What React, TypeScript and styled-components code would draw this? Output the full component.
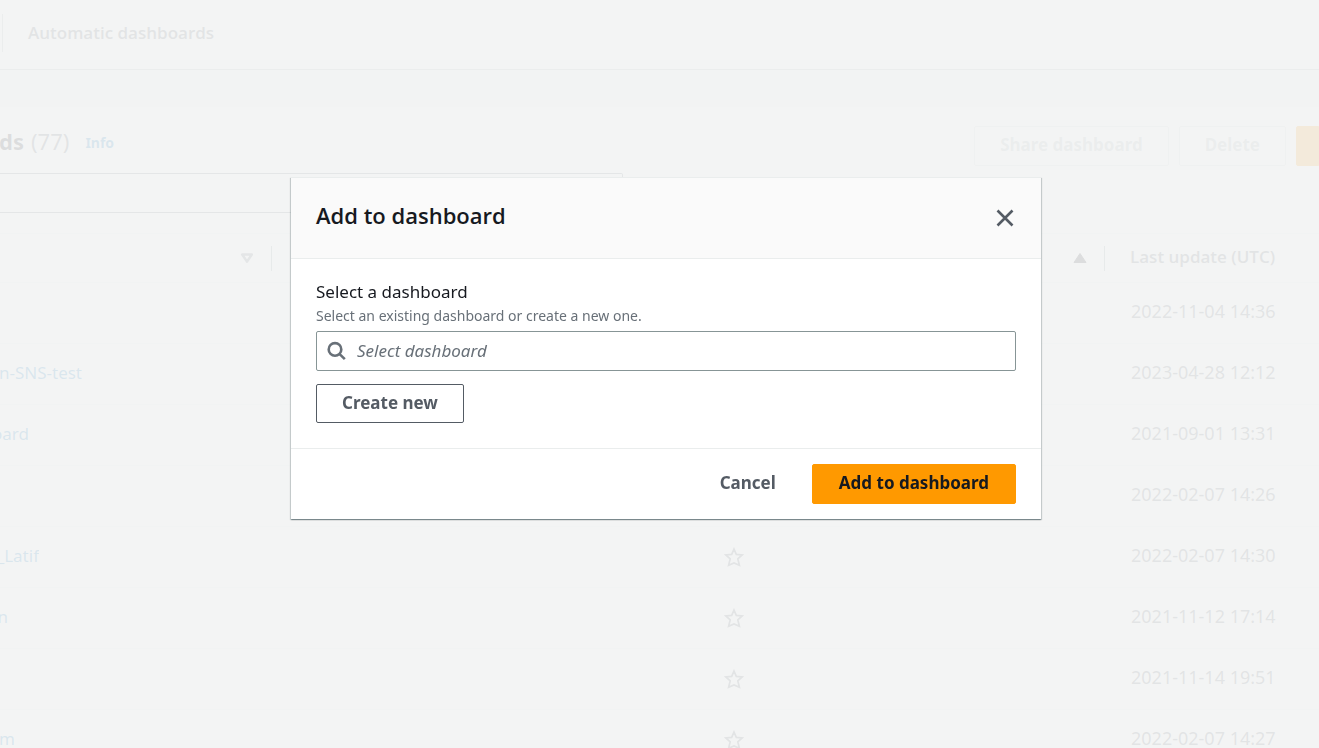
import React from "react";
import styled, { createGlobalStyle, css } from "styled-components";

const GlobalStyle = createGlobalStyle`
  *, *::before, *::after { box-sizing: border-box; }
  body {
    margin: 0;
    background: #f2f3f3;
    color: #16191f;
    font-family: "Noto Sans", "Open Sans", sans-serif;
    font-size: 17px;
    line-height: 24px;
  }
  button, input { font: inherit; }
`;

const headingFont = css`
  font-family: "Open Sans", "Noto Sans", sans-serif;
  font-weight: 600;
`;

const Page = styled.main`
  height: 100vh;
  overflow: hidden;
`;

const TabBar = styled.nav`
  display: flex;
  align-items: center;
  height: 70px;
  padding: 0 0 4px 2px;
  background: #fafafa;
  border-bottom: 1px solid #aab7b8;
`;

const Tab = styled.a`
  display: flex;
  align-items: center;
  height: 38px;
  padding: 0 25px;
  border-left: 1px solid #aab7b8;
  color: #545b64;
  text-decoration: none;
  ${headingFont}
`;

const Panel = styled.section`
  margin-top: 37px;
  padding-top: 19px;
  background: #fff;
`;

const PanelHeader = styled.header`
  display: flex;
  justify-content: space-between;
  height: 40px;
`;

const TitleGroup = styled.div`
  display: flex;
  align-items: center;
  gap: 16px;
  height: 30px;
`;

const Clipped = styled.span<{ $visible: number }>`
  display: inline-flex;
  justify-content: flex-end;
  width: ${(p) => p.$visible}px;
  overflow: hidden;
  white-space: nowrap;
`;

const PanelTitle = styled.h1`
  display: flex;
  gap: 7px;
  margin: 0;
  font-size: 22px;
  line-height: 30px;
  font-weight: 700;
`;

const Count = styled.span`
  color: #545b64;
  font-weight: 400;
`;

const InfoLink = styled.a`
  padding-top: 4px;
  color: #0073bb;
  font-size: 14px;
  font-weight: 700;
  text-decoration: none;
`;

const Actions = styled.div`
  display: flex;
  gap: 10px;
`;

type Kind = "normal" | "primary" | "link" | "disabled";

const kinds = {
  normal: css`
    background: #fff;
    border-color: #545b64;
    color: #545b64;
  `,
  primary: css`
    padding: 0 26px 2px;
    background: #ff9900;
    border-color: #ff9900;
    color: #16191f;
  `,
  link: css`
    background: transparent;
    border-color: transparent;
    color: #545b64;
  `,
  disabled: css`
    background: #fff;
    border-color: #d5dbdb;
    color: #aab7b8;
  `,
};

const Button = styled.button<{ $kind: Kind }>`
  height: 40px;
  padding: 0 25px 2px;
  border: 1px solid;
  border-radius: 2px;
  font-weight: 700;
  white-space: nowrap;
  ${(p) => kinds[p.$kind]}
`;

const EdgeButton = styled(Button)`
  width: 23px;
  padding: 0;
  border-radius: 2px 0 0 2px;
`;

const FilterInput = styled.input`
  display: block;
  width: 623px;
  height: 40px;
  margin: 7px 0 20px;
  border: 1px solid #687078;
  border-left: 0;
  border-radius: 0 2px 2px 0;
  background: #fff;
`;

const Table = styled.table`
  width: 100%;
  table-layout: fixed;
  border-collapse: collapse;
  text-align: left;
`;

const Column = styled.col<{ $width?: number }>`
  width: ${(p) => (p.$width ? `${p.$width}px` : "auto")};
`;

const HeadCell = styled.th`
  height: 49px;
  padding: 0;
  border-top: 1px solid #eaeded;
  border-bottom: 1px solid #eaeded;
  background: #fafafa;
  color: #545b64;
  ${headingFont}
`;

const HeadContent = styled.div<{ $divider?: boolean }>`
  display: flex;
  align-items: center;
  justify-content: ${(p) => (p.$divider ? "flex-end" : "flex-start")};
  height: 25px;
  padding: ${(p) => (p.$divider ? "0 17px 0 0" : "0 0 2px 25px")};
  border-right: ${(p) => (p.$divider ? "1px solid #879596" : "0")};
`;

const Cell = styled.td`
  height: 61px;
  padding: 0 0 2px;
  border-bottom: 1px solid #eaeded;
  vertical-align: middle;
`;

const DateCell = styled(Cell)`
  padding: 0 0 4px 26px;
  font-size: 18px;
  color: #545b64;
`;

const StarCell = styled(Cell)`
  padding: 0 0 0 15px;
  svg { display: block; }
`;

const NameLink = styled.a`
  color: #0073bb;
  text-decoration: none;
`;

const Overlay = styled.div`
  position: fixed;
  inset: 0;
  display: flex;
  align-items: flex-start;
  justify-content: center;
  padding: 177px 0 0 13px;
  background: rgba(242, 243, 243, 0.9);
`;

const Dialog = styled.div`
  width: 750px;
  max-width: 100%;
  border-top: 1px solid #eaeded;
  background: #fff;
  box-shadow:
    0 1px 1px 0 rgba(0, 28, 36, 0.3),
    1px 1px 1px 0 rgba(0, 28, 36, 0.15),
    -1px 1px 1px 0 rgba(0, 28, 36, 0.15);
`;

const DialogHeader = styled.header`
  display: flex;
  align-items: center;
  justify-content: space-between;
  height: 81px;
  padding: 0 25px;
  background: #fafafa;
  border-bottom: 1px solid #eaeded;
`;

const DialogTitle = styled.h2`
  margin: 0;
  padding-bottom: 6px;
  font-size: 22px;
  line-height: 30px;
  ${headingFont}
`;

const CloseButton = styled.button`
  display: flex;
  padding: 0;
  border: 0;
  background: none;
  color: #545b64;
`;

const DialogBody = styled.div`
  display: flex;
  flex-direction: column;
  align-items: flex-start;
  padding: 21px 25px 25px;
`;

const Description = styled.p`
  margin: 1px 0 5px;
  color: #687078;
  font-size: 14px;
  line-height: 21px;
`;

const SearchBox = styled.div`
  display: flex;
  align-items: center;
  gap: 10px;
  width: 100%;
  height: 40px;
  margin-bottom: 13px;
  padding: 0 10px;
  border: 1px solid #879596;
  border-radius: 2px;
  color: #687078;
`;

const SearchInput = styled.input`
  flex: 1;
  min-width: 0;
  padding: 0;
  border: 0;
  outline: 0;
  background: none;
  &::placeholder {
    color: #687078;
    opacity: 1;
    font-style: italic;
  }
`;

const DialogFooter = styled.footer`
  display: flex;
  justify-content: flex-end;
  gap: 10px;
  padding: 15px 25px;
  border-top: 1px solid #eaeded;
`;

const CreateButton = styled(Button)`
  height: 39px;
`;

const Star = () => (
  <svg width="20" height="20" viewBox="0 0 20 20" fill="none" stroke="#545b64" strokeWidth="1.7">
    <path d="M10 2 12.3 7.4 18.2 7.9 13.8 11.8 15.4 18.2 10 15.9 4.6 18.2 6.2 11.8 1.8 7.9 7.7 7.4Z" />
  </svg>
);

const rows = [
  { name: "", visible: 0, date: "2022-11-04 14:36" },
  { name: "n-SNS-test", visible: 82, date: "2023-04-28 12:12" },
  { name: "oard", visible: 29, date: "2021-09-01 13:31" },
  { name: "", visible: 0, date: "2022-02-07 14:26" },
  { name: "_Latif", visible: 39, date: "2022-02-07 14:30" },
  { name: "n", visible: 8, date: "2021-11-12 17:14" },
  { name: "", visible: 0, date: "2021-11-14 19:51" },
  { name: "m", visible: 15, date: "2022-02-07 14:27" },
];

export default function App() {
  return (
    <>
      <GlobalStyle />
      <Page>
        <TabBar>
          <Tab href="#automatic">Automatic dashboards</Tab>
        </TabBar>
        <Panel>
          <PanelHeader>
            <TitleGroup>
              <PanelTitle>
                <Clipped $visible={24}>ds</Clipped>
                <Count>(77)</Count>
              </PanelTitle>
              <InfoLink href="#info">Info</InfoLink>
            </TitleGroup>
            <Actions>
              <Button $kind="disabled" disabled>Share dashboard</Button>
              <Button $kind="disabled" disabled>Delete</Button>
              <EdgeButton $kind="primary" aria-label="Create dashboard" />
            </Actions>
          </PanelHeader>
          <FilterInput aria-label="Filter dashboards" />
          <Table>
            <colgroup>
              <Column $width={272} />
              <Column />
              <Column $width={396} />
              <Column $width={214} />
            </colgroup>
            <thead>
              <tr>
                <HeadCell>
                  <HeadContent $divider>
                    <svg width="14" height="12" viewBox="0 0 14 12" fill="none" stroke="#687078" strokeWidth="2.5" strokeLinejoin="round">
                      <path d="M2.2 2.5h9.6L7 9.6Z" />
                    </svg>
                  </HeadContent>
                </HeadCell>
                <HeadCell />
                <HeadCell>
                  <HeadContent $divider>
                    <svg width="14" height="12" viewBox="0 0 14 12" fill="#16191f" stroke="#16191f" strokeLinejoin="round">
                      <path d="M1 10.5h12L7 1.5Z" />
                    </svg>
                  </HeadContent>
                </HeadCell>
                <HeadCell>
                  <HeadContent>Last update (UTC)</HeadContent>
                </HeadCell>
              </tr>
            </thead>
            <tbody>
              {rows.map((row) => (
                <tr key={row.date}>
                  <Cell>
                    {row.name && (
                      <NameLink href="#dashboard">
                        <Clipped $visible={row.visible}>{row.name}</Clipped>
                      </NameLink>
                    )}
                  </Cell>
                  <Cell />
                  <StarCell><Star /></StarCell>
                  <DateCell>{row.date}</DateCell>
                </tr>
              ))}
            </tbody>
          </Table>
        </Panel>
      </Page>
      <Overlay>
        <Dialog role="dialog" aria-modal="true" aria-labelledby="dialog-title">
          <DialogHeader>
            <DialogTitle id="dialog-title">Add to dashboard</DialogTitle>
            <CloseButton aria-label="Close">
              <svg width="22" height="22" viewBox="0 0 22 22" fill="none" stroke="currentColor" strokeWidth="2.6">
                <path d="M3.5 3.5 18.5 18.5M18.5 3.5 3.5 18.5" />
              </svg>
            </CloseButton>
          </DialogHeader>
          <DialogBody>
            <label htmlFor="dashboard">Select a dashboard</label>
            <Description id="dashboard-hint">Select an existing dashboard or create a new one.</Description>
            <SearchBox>
              <svg width="20" height="20" viewBox="0 0 20 20" fill="none" stroke="currentColor" strokeWidth="2.6">
                <circle cx="8" cy="8.4" r="6.3" />
                <path d="M12.4 12.8 17.8 18.2" />
              </svg>
              <SearchInput id="dashboard" aria-describedby="dashboard-hint" placeholder="Select dashboard" />
            </SearchBox>
            <CreateButton $kind="normal">Create new</CreateButton>
          </DialogBody>
          <DialogFooter>
            <Button $kind="link">Cancel</Button>
            <Button $kind="primary">Add to dashboard</Button>
          </DialogFooter>
        </Dialog>
      </Overlay>
    </>
  );
}
